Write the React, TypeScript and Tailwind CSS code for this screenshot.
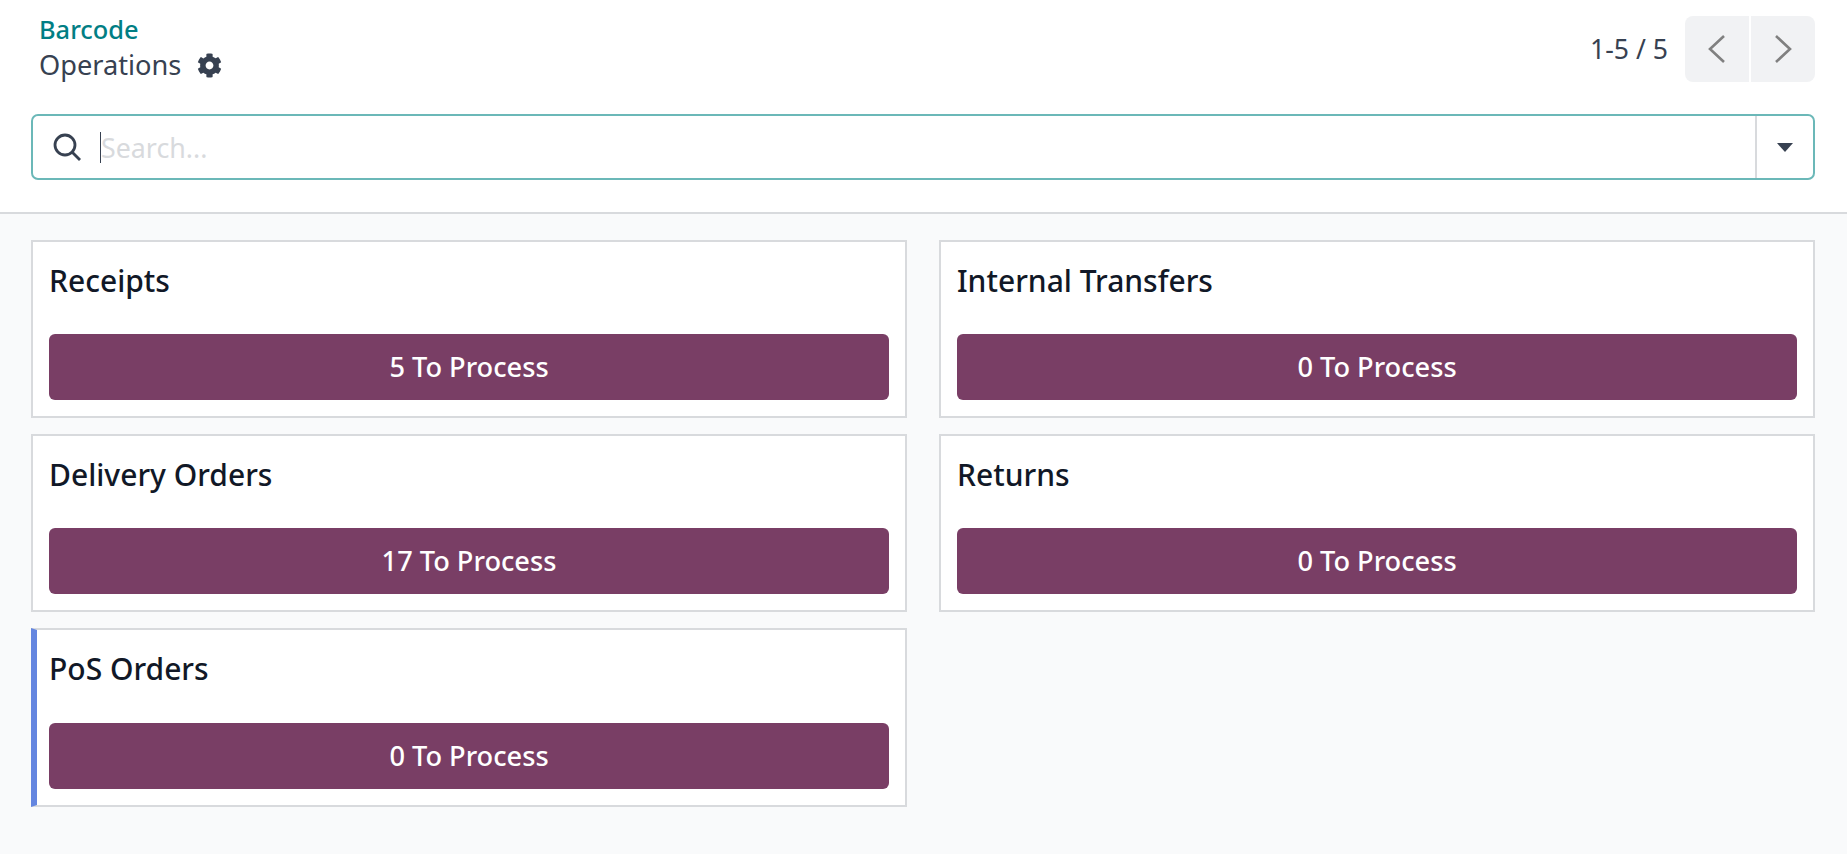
import React from 'react';
import { FaCog } from 'react-icons/fa';

const cards = [
  { name: 'Receipts', count: 5 },
  { name: 'Internal Transfers', count: 0 },
  { name: 'Delivery Orders', count: 17 },
  { name: 'Returns', count: 0 },
  { name: 'PoS Orders', count: 0, accent: true },
];

const OperationCard = ({ name, count, accent }: { name: string; count: number; accent?: boolean }) => (
  <div className={`bg-white border-2 border-[#d8dadd] pr-[16px] pt-[21px] ${accent ? 'h-[179px] border-l-[6px] border-l-[#6486e0] pl-[12px]' : 'h-[178px] pl-[16px]'}`}>
    <h2 className={`text-[30px] leading-[36px] font-medium text-[#111827] ${accent ? 'h-[72px]' : 'h-[71px]'}`}>{name}</h2>
    <button className="w-full h-[66px] rounded-[6px] bg-[#793e65] text-white text-[27.2px] font-medium">
      {count} To Process
    </button>
  </div>
);

export default function App() {
  return (
    <div className="min-h-[854px] bg-[#f9fafb] font-['Noto_Sans',sans-serif] text-[#374151]">
      <div className="h-[214px] bg-white border-b-2 border-[#d8dadd] pl-[31px] pr-[32px] pt-[13px]">
        <div className="flex justify-between h-[69px]">
          <div className="pl-[8px]">
            <div className="text-[25.4px] leading-[32px] font-medium text-[#017e84]">Barcode</div>
            <div className="flex items-center gap-[16px] text-[27.2px] leading-[36px] mt-[2px]">
              <span>Operations</span>
              <FaCog className="w-[25px] h-[25px]" />
            </div>
          </div>
          <div className="flex items-center pt-[5px]">
            <span className="text-[26.6px] mr-[17px]">1-5 / 5</span>
            <div className="flex gap-[2px] -mt-[2px]">
              <button className="w-[64px] h-[66px] rounded-l-[8px] bg-[#f1f2f4] flex items-center justify-center">
                <svg width="18" height="30" viewBox="0 0 18 30" fill="none" stroke="#808080" strokeWidth="2.6"><path d="M16 2 2 15l14 13" /></svg>
              </button>
              <button className="w-[64px] h-[66px] rounded-r-[8px] bg-[#f1f2f4] flex items-center justify-center">
                <svg width="18" height="30" viewBox="0 0 18 30" fill="none" stroke="#808080" strokeWidth="2.6"><path d="M2 2l14 13L2 28" /></svg>
              </button>
            </div>
          </div>
        </div>
        <div className="mt-[32px] h-[66px] flex items-center rounded-[7px] border-2 border-[#6bb8b8]">
          <svg className="ml-[20px] mr-[19px]" width="28" height="28" viewBox="0 0 28 28" fill="none" stroke="#374151" strokeWidth="2.8">
            <circle cx="12" cy="12" r="10" />
            <path d="M19 19l8 8" />
          </svg>
          <span className="w-px h-[31px] bg-[#374151]" />
          <input className="flex-1 min-w-0 h-full bg-transparent outline-none text-[26.8px] text-[#374151] placeholder:text-[#d8dadd]" placeholder="Search..." />
          <div className="w-[58px] h-full border-l-2 border-[#d8dadd] flex items-center justify-center">
            <svg width="16" height="9" viewBox="0 0 16 9" fill="#374151"><path d="M0 0h16L8 9z" /></svg>
          </div>
        </div>
      </div>
      <div className="grid grid-cols-2 gap-x-[32px] gap-y-[16px] pl-[31px] pr-[32px] pt-[26px]">
        {cards.map((card) => (
          <OperationCard key={card.name} {...card} />
        ))}
      </div>
    </div>
  );
}
